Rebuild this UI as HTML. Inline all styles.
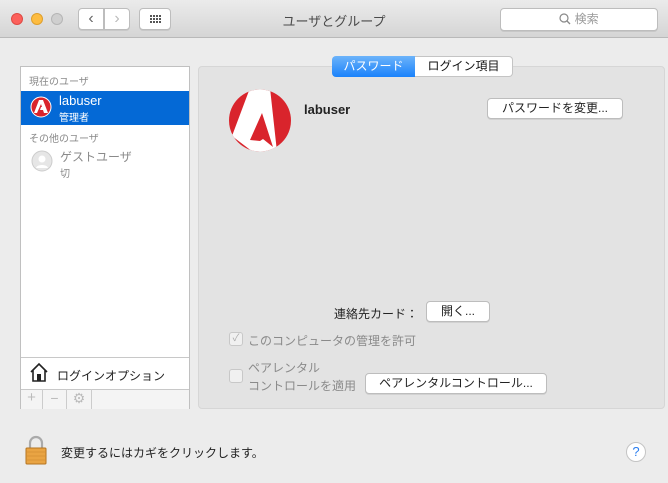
<!DOCTYPE html><html><head><meta charset="utf-8"><style>
*{margin:0;padding:0;box-sizing:border-box}
body{width:668px;height:483px;overflow:hidden;background:#ececec;font-family:"Liberation Sans","Noto Sans CJK JP",sans-serif;font-size:12px;color:#222;position:relative}
.a{position:absolute}
.btn{position:absolute;background:#fff;border:1px solid #bdbdbd;border-radius:4px;font-size:12px;text-align:center;box-shadow:0 1px 0 rgba(0,0,0,.08)}
.gray{color:#8a8a8a}
</style></head><body>
<div class="a" style="left:0;top:0;width:668px;height:38px;background:linear-gradient(#ebebeb,#d5d5d5);border-bottom:1px solid #b9b9b9"></div>
<div class="a" style="left:11px;top:13px;width:12px;height:12px;border-radius:50%;background:#fc605b;border:1px solid #de4a44"></div>
<div class="a" style="left:31px;top:13px;width:12px;height:12px;border-radius:50%;background:#fdbc40;border:1px solid #de9f2c"></div>
<div class="a" style="left:51px;top:13px;width:12px;height:12px;border-radius:50%;background:#cfcfcf;border:1px solid #b5b5b5"></div>
<div class="btn" style="left:78px;top:8px;width:26px;height:22px;border-radius:4px 0 0 4px;font-size:16px;line-height:19px;color:#666">‹</div>
<div class="btn" style="left:104px;top:8px;width:26px;height:22px;border-radius:0 4px 4px 0;font-size:16px;line-height:19px;color:#bbb">›</div>
<div class="btn" style="left:139px;top:8px;width:32px;height:22px"><svg width="30" height="20"><g fill="#555"><rect x="10" y="6" width="2" height="2"/><rect x="13" y="6" width="2" height="2"/><rect x="16" y="6" width="2" height="2"/><rect x="19" y="6" width="2" height="2"/><rect x="10" y="9" width="2" height="2"/><rect x="13" y="9" width="2" height="2"/><rect x="16" y="9" width="2" height="2"/><rect x="19" y="9" width="2" height="2"/><rect x="10" y="12" width="2" height="2"/><rect x="13" y="12" width="2" height="2"/><rect x="16" y="12" width="2" height="2"/><rect x="19" y="12" width="2" height="2"/></g></svg></div>
<div class="a" style="left:0;width:668px;top:11px;text-align:center;font-size:13px;color:#4a4a4a">ユーザとグループ</div>
<div class="btn" style="left:500px;top:8px;width:158px;height:23px;color:#999;line-height:21px;font-size:12px"><svg width="12" height="12" style="vertical-align:-2px"><circle cx="5" cy="5" r="4" fill="none" stroke="#888" stroke-width="1.2"/><line x1="8" y1="8" x2="11" y2="11" stroke="#888" stroke-width="1.3"/></svg> 検索</div>

<div class="a" style="left:198px;top:66px;width:467px;height:343px;background:#e3e3e3;border:1px solid #d6d6d6;border-radius:4px"></div>
<div class="a" style="left:332px;top:56px;width:83px;height:21px;background:linear-gradient(#6cb3fa,#1a82fb);border-radius:4px 0 0 4px;color:#fff;text-align:center;line-height:20px;font-size:12px">パスワード</div>
<div class="a" style="left:415px;top:56px;width:98px;height:21px;background:#fff;border:1px solid #c4c4c4;border-left:none;border-radius:0 4px 4px 0;text-align:center;line-height:19px;font-size:12px;color:#111">ログイン項目</div>

<div class="a" style="left:20px;top:66px;width:170px;height:343px;background:#fff;border:1px solid #c0c0c0"></div>
<div class="a gray" style="left:29px;top:73px;font-size:10px">現在のユーザ</div>
<div class="a" style="left:21px;top:91px;width:168px;height:34px;background:#0469d6"></div>
<svg class="a" style="left:30px;top:96px" width="22" height="22"><circle cx="11" cy="11" r="10" fill="#d9242c" stroke="#fff" stroke-width="1"/><path d="M9 4h4l5 13h-4l-1-3h-3l1-3h1l-1-3-4 9H4z" fill="#fff"/></svg>
<div class="a" style="left:59px;top:93px;color:#fff;font-size:13px">labuser</div>
<div class="a" style="left:59px;top:109px;color:#fff;font-size:10px">管理者</div>
<div class="a gray" style="left:29px;top:130px;font-size:10px">その他のユーザ</div>
<svg class="a" style="left:31px;top:150px" width="22" height="22"><circle cx="11" cy="11" r="10" fill="#e6e6e6" stroke="#ccc"/><circle cx="11" cy="9" r="3.5" fill="#fff"/><path d="M5 18c1-4 11-4 12 0z" fill="#fff"/></svg>
<div class="a gray" style="left:60px;top:148px;font-size:12px">ゲストユーザ</div>
<div class="a gray" style="left:60px;top:165px;font-size:10px">切</div>
<div class="a" style="left:21px;top:357px;width:168px;height:1px;background:#c8c8c8"></div>
<svg class="a" style="left:29px;top:362px" width="20" height="20"><path d="M2 10L10 2l8 8M4 8v11h12V8" fill="none" stroke="#222" stroke-width="1.6"/><rect x="8" y="12" width="4" height="7" fill="#222"/></svg>
<div class="a" style="left:57px;top:367px;font-size:12px">ログインオプション</div>
<div class="a" style="left:21px;top:389px;width:168px;height:20px;background:#f4f4f4;border-top:1px solid #c8c8c8"></div>
<div class="a" style="left:21px;top:389px;width:22px;height:20px;border-right:1px solid #ccc;color:#bbb;text-align:center;font-size:15px;line-height:18px">+</div>
<div class="a" style="left:43px;top:389px;width:24px;height:20px;border-right:1px solid #ccc;color:#bbb;text-align:center;font-size:14px;line-height:18px">−</div>
<div class="a" style="left:67px;top:389px;width:25px;height:20px;border-right:1px solid #ccc;color:#bbb;text-align:center;font-size:14px;line-height:19px">⚙</div>

<svg class="a" style="left:229px;top:89px" width="62" height="63"><defs><clipPath id="c"><circle cx="31" cy="31.5" r="31"/></clipPath></defs><circle cx="31" cy="31.5" r="31" fill="#d9242c"/><g clip-path="url(#c)"><path d="M21 -1H41L48 63H24L3 47Z" fill="#fff"/><path d="M33 24L44 58L34 50L31 52L21 51Z" fill="#d9242c"/></g></svg>
<div class="a" style="left:304px;top:102px;font-size:13px;font-weight:bold">labuser</div>
<div class="btn" style="left:487px;top:98px;width:136px;height:21px;line-height:19px">パスワードを変更...</div>
<div class="a" style="left:334px;top:305px">連絡先カード：</div>
<div class="btn" style="left:426px;top:301px;width:64px;height:21px;line-height:19px">開く...</div>
<div class="a" style="left:229px;top:332px;width:14px;height:14px;border:1px solid #c8c8c8;border-radius:3px;background:#f0f0f0;color:#aaa;font-size:10px;text-align:center;line-height:12px">✓</div>
<div class="a gray" style="left:248px;top:332px">このコンピュータの管理を許可</div>
<div class="a" style="left:229px;top:369px;width:14px;height:14px;border:1px solid #c8c8c8;border-radius:3px;background:#f0f0f0"></div>
<div class="a gray" style="left:248px;top:359px">ペアレンタル</div>
<div class="a gray" style="left:248px;top:377px">コントロールを適用</div>
<div class="btn" style="left:365px;top:373px;width:182px;height:21px;line-height:19px">ペアレンタルコントロール...</div>

<svg class="a" style="left:24px;top:435px" width="24" height="30"><path d="M6 13V8a6 6 0 0 1 12 0v5" fill="none" stroke="#aaa" stroke-width="2.2"/><rect x="2" y="13" width="20" height="16" rx="1" fill="#e9a443" stroke="#b57420"/><g stroke="#c9862d" stroke-width=".6"><line x1="3" y1="17" x2="21" y2="17"/><line x1="3" y1="21" x2="21" y2="21"/><line x1="3" y1="25" x2="21" y2="25"/></g></svg>
<div class="a" style="left:61px;top:444px;font-size:12px">変更するにはカギをクリックします。</div>
<div class="a" style="left:626px;top:442px;width:20px;height:20px;border-radius:50%;background:#fff;border:1px solid #c4c4c4;color:#2a7ef0;text-align:center;line-height:18px;font-size:13px">?</div>
</body></html>
